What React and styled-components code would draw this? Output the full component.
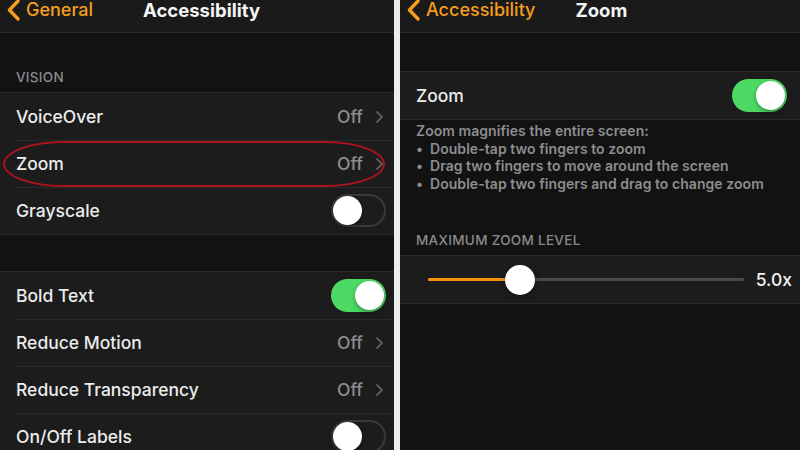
import React from "react";
import styled, { createGlobalStyle } from "styled-components";

const GlobalStyle = createGlobalStyle`
  html, body {
    margin: 0;
    padding: 0;
    background: #121212;
  }
  body {
    font-family: Inter, "Noto Sans", "Liberation Sans", sans-serif;
    -webkit-font-smoothing: antialiased;
  }
`;

const Chevron = () => (
  <svg width="15" height="22" viewBox="0 0 15 22">
    <path
      d="M12 2 L3.5 11 L12 20"
      fill="none"
      stroke="#f59e1b"
      strokeWidth="3.4"
      strokeLinecap="round"
      strokeLinejoin="round"
    />
  </svg>
);

const Disclosure = () => (
  <svg width="9" height="14" viewBox="0 0 9 14">
    <path
      d="M2 2 L7 7 L2 12"
      fill="none"
      stroke="#5c5c5e"
      strokeWidth="1.8"
      strokeLinecap="round"
      strokeLinejoin="round"
    />
  </svg>
);

const leftRowsA = [
  { label: "VoiceOver", value: "Off" },
  { label: "Zoom", value: "Off", marked: true },
  { label: "Grayscale", toggle: false },
];

const leftRowsB = [
  { label: "Bold Text", toggle: true },
  { label: "Reduce Motion", value: "Off" },
  { label: "Reduce Transparency", value: "Off" },
  { label: "On/Off Labels", toggle: false },
];

const tips = [
  "Double-tap two fingers to zoom",
  "Drag two fingers to move around the screen",
  "Double-tap two fingers and drag to change zoom",
];

const Row = ({ row }) => (
  <Cell>
    <Label>{row.label}</Label>
    {row.toggle !== undefined ? (
      <Toggle on={row.toggle}>
        <Knob on={row.toggle} />
      </Toggle>
    ) : (
      <Accessory>
        <Value>{row.value}</Value>
        <Disclosure />
      </Accessory>
    )}
    {row.marked && <Marker />}
  </Cell>
);

const App = () => {
  const level = 0.29;
  return (
    <>
      <GlobalStyle />
      <Screen>
        <Panel width={394} edge={8}>
          <NavBar>
            <Back>
              <Chevron />
              <BackText>General</BackText>
            </Back>
            <Title offset={50}>Accessibility</Title>
          </NavBar>
          <SectionHeader h={59}>VISION</SectionHeader>
          <Group>
            {leftRowsA.map((r) => (
              <Row key={r.label} row={r} />
            ))}
          </Group>
          <Spacer h={36} />
          <Group>
            {leftRowsB.map((r) => (
              <Row key={r.label} row={r} />
            ))}
          </Group>
        </Panel>
        <Divider />
        <Panel edge={13}>
          <NavBar>
            <Back>
              <Chevron />
              <BackText>Accessibility</BackText>
            </Back>
            <Title offset={40}>Zoom</Title>
          </NavBar>
          <Spacer h={38} />
          <Group>
            <Cell>
              <Label>Zoom</Label>
              <Toggle on>
                <Knob on />
              </Toggle>
            </Cell>
          </Group>
          <Footer>
            <FooterLine>Zoom magnifies the entire screen:</FooterLine>
            {tips.map((t) => (
              <FooterLine key={t}>
                <Bullet>•</Bullet>
                {t}
              </FooterLine>
            ))}
          </Footer>
          <SectionHeader h={28}>MAXIMUM ZOOM LEVEL</SectionHeader>
          <Group>
            <SliderCell>
              <Track>
                <Fill style={{ width: `${level * 100}%` }} />
                <Thumb style={{ left: `${level * 100}%` }} />
              </Track>
              <SliderValue>5.0x</SliderValue>
            </SliderCell>
          </Group>
        </Panel>
      </Screen>
    </>
  );
};

export default App;

const Screen = styled.div`
  width: 800px;
  height: 450px;
  display: flex;
  overflow: hidden;
  background: #121212;
`;

const Panel = styled.div`
  ${(p) => (p.width ? `width: ${p.width}px; flex-shrink: 0;` : "flex: 1;")}
  display: flex;
  flex-direction: column;
  background: #121212;
  min-width: 0;
  --edge: ${(p) => p.edge}px;
  & > * {
    flex-shrink: 0;
  }
`;

const Divider = styled.div`
  width: 6px;
  background: #ececec;
  flex-shrink: 0;
`;

const NavBar = styled.div`
  height: 33px;
  box-sizing: border-box;
  background: #1a1a1b;
  border-bottom: 1px solid #2a2a2c;
  display: flex;
  align-items: flex-start;
  position: relative;
`;

const Back = styled.div`
  display: flex;
  align-items: center;
  gap: 5px;
  padding-left: 6px;
  margin-top: -1px;
  height: 22px;
`;

const BackText = styled.span`
  color: #f59e1b;
  font-size: 18px;
  font-weight: 500;
  line-height: 22px;
`;

const Title = styled.div`
  color: #f4f4f4;
  font-size: 18.5px;
  font-weight: 700;
  line-height: 22px;
  margin-top: -1px;
  margin-left: ${(p) => p.offset}px;
`;

const SectionHeader = styled.div`
  height: ${(p) => p.h}px;
  box-sizing: border-box;
  display: flex;
  align-items: flex-end;
  padding: 0 16px 7px;
  color: #8a8a8c;
  font-size: 13.5px;
  font-weight: 500;
  letter-spacing: 0.3px;
`;

const Group = styled.div`
  background: #1c1c1d;
  border-top: 1px solid #2a2a2c;
  border-bottom: 1px solid #2a2a2c;
`;

const Spacer = styled.div`
  height: ${(p) => p.h}px;
`;

const Cell = styled.div`
  position: relative;
  height: 47px;
  box-sizing: border-box;
  display: flex;
  align-items: center;
  justify-content: space-between;
  padding: 0 var(--edge) 0 16px;

  & + &::before {
    content: "";
    position: absolute;
    top: 0;
    left: 16px;
    right: 0;
    height: 1px;
    background: #2a2a2c;
  }
`;

const Label = styled.span`
  color: #ececec;
  font-size: 17.5px;
  font-weight: 500;
`;

const Accessory = styled.div`
  display: flex;
  align-items: center;
  gap: 12px;
  padding-right: 2px;
`;

const Value = styled.span`
  color: #8d8d8f;
  font-size: 17.5px;
  font-weight: 500;
`;

const Toggle = styled.div`
  width: 55px;
  height: 33px;
  box-sizing: border-box;
  border-radius: 17px;
  background: ${(p) => (p.on ? "#4cd964" : "#1c1c1d")};
  border: ${(p) => (p.on ? "none" : "2px solid #39393b")};
  position: relative;
`;

const Knob = styled.div`
  position: absolute;
  top: ${(p) => (p.on ? "2px" : "0")};
  ${(p) => (p.on ? "right: 2px;" : "left: 0;")}
  width: 29px;
  height: 29px;
  border-radius: 50%;
  background: #ffffff;
  box-shadow: 0 2px 4px rgba(0, 0, 0, 0.35);
`;

const Marker = styled.div`
  position: absolute;
  left: 3px;
  right: 9px;
  top: 1px;
  bottom: 0;
  border: 2px solid #a9141e;
  border-radius: 60px / 23px;
  pointer-events: none;
`;

const Footer = styled.div`
  padding: 2px 16px 0;
  height: 107px;
  box-sizing: border-box;
`;

const FooterLine = styled.div`
  color: #8d8d8f;
  font-size: 14px;
  font-weight: 600;
  line-height: 17.7px;
  letter-spacing: 0.05px;
  white-space: nowrap;
`;

const Bullet = styled.span`
  display: inline-block;
  width: 14px;
`;

const SliderCell = styled.div`
  height: 47px;
  box-sizing: border-box;
  display: flex;
  align-items: center;
  padding: 0 8px 0 28px;
  gap: 12px;
`;

const Track = styled.div`
  flex: 1;
  height: 3px;
  border-radius: 2px;
  background: #4a4a4c;
  position: relative;
`;

const Fill = styled.div`
  position: absolute;
  left: 0;
  top: 0;
  bottom: 0;
  background: #f5930f;
  border-radius: 2px;
`;

const Thumb = styled.div`
  position: absolute;
  top: 50%;
  width: 30px;
  height: 30px;
  margin-left: -15px;
  margin-top: -15px;
  border-radius: 50%;
  background: #ffffff;
  box-shadow: 0 2px 5px rgba(0, 0, 0, 0.4);
`;

const SliderValue = styled.span`
  color: #f2f2f2;
  font-size: 17.5px;
  font-weight: 500;
`;
